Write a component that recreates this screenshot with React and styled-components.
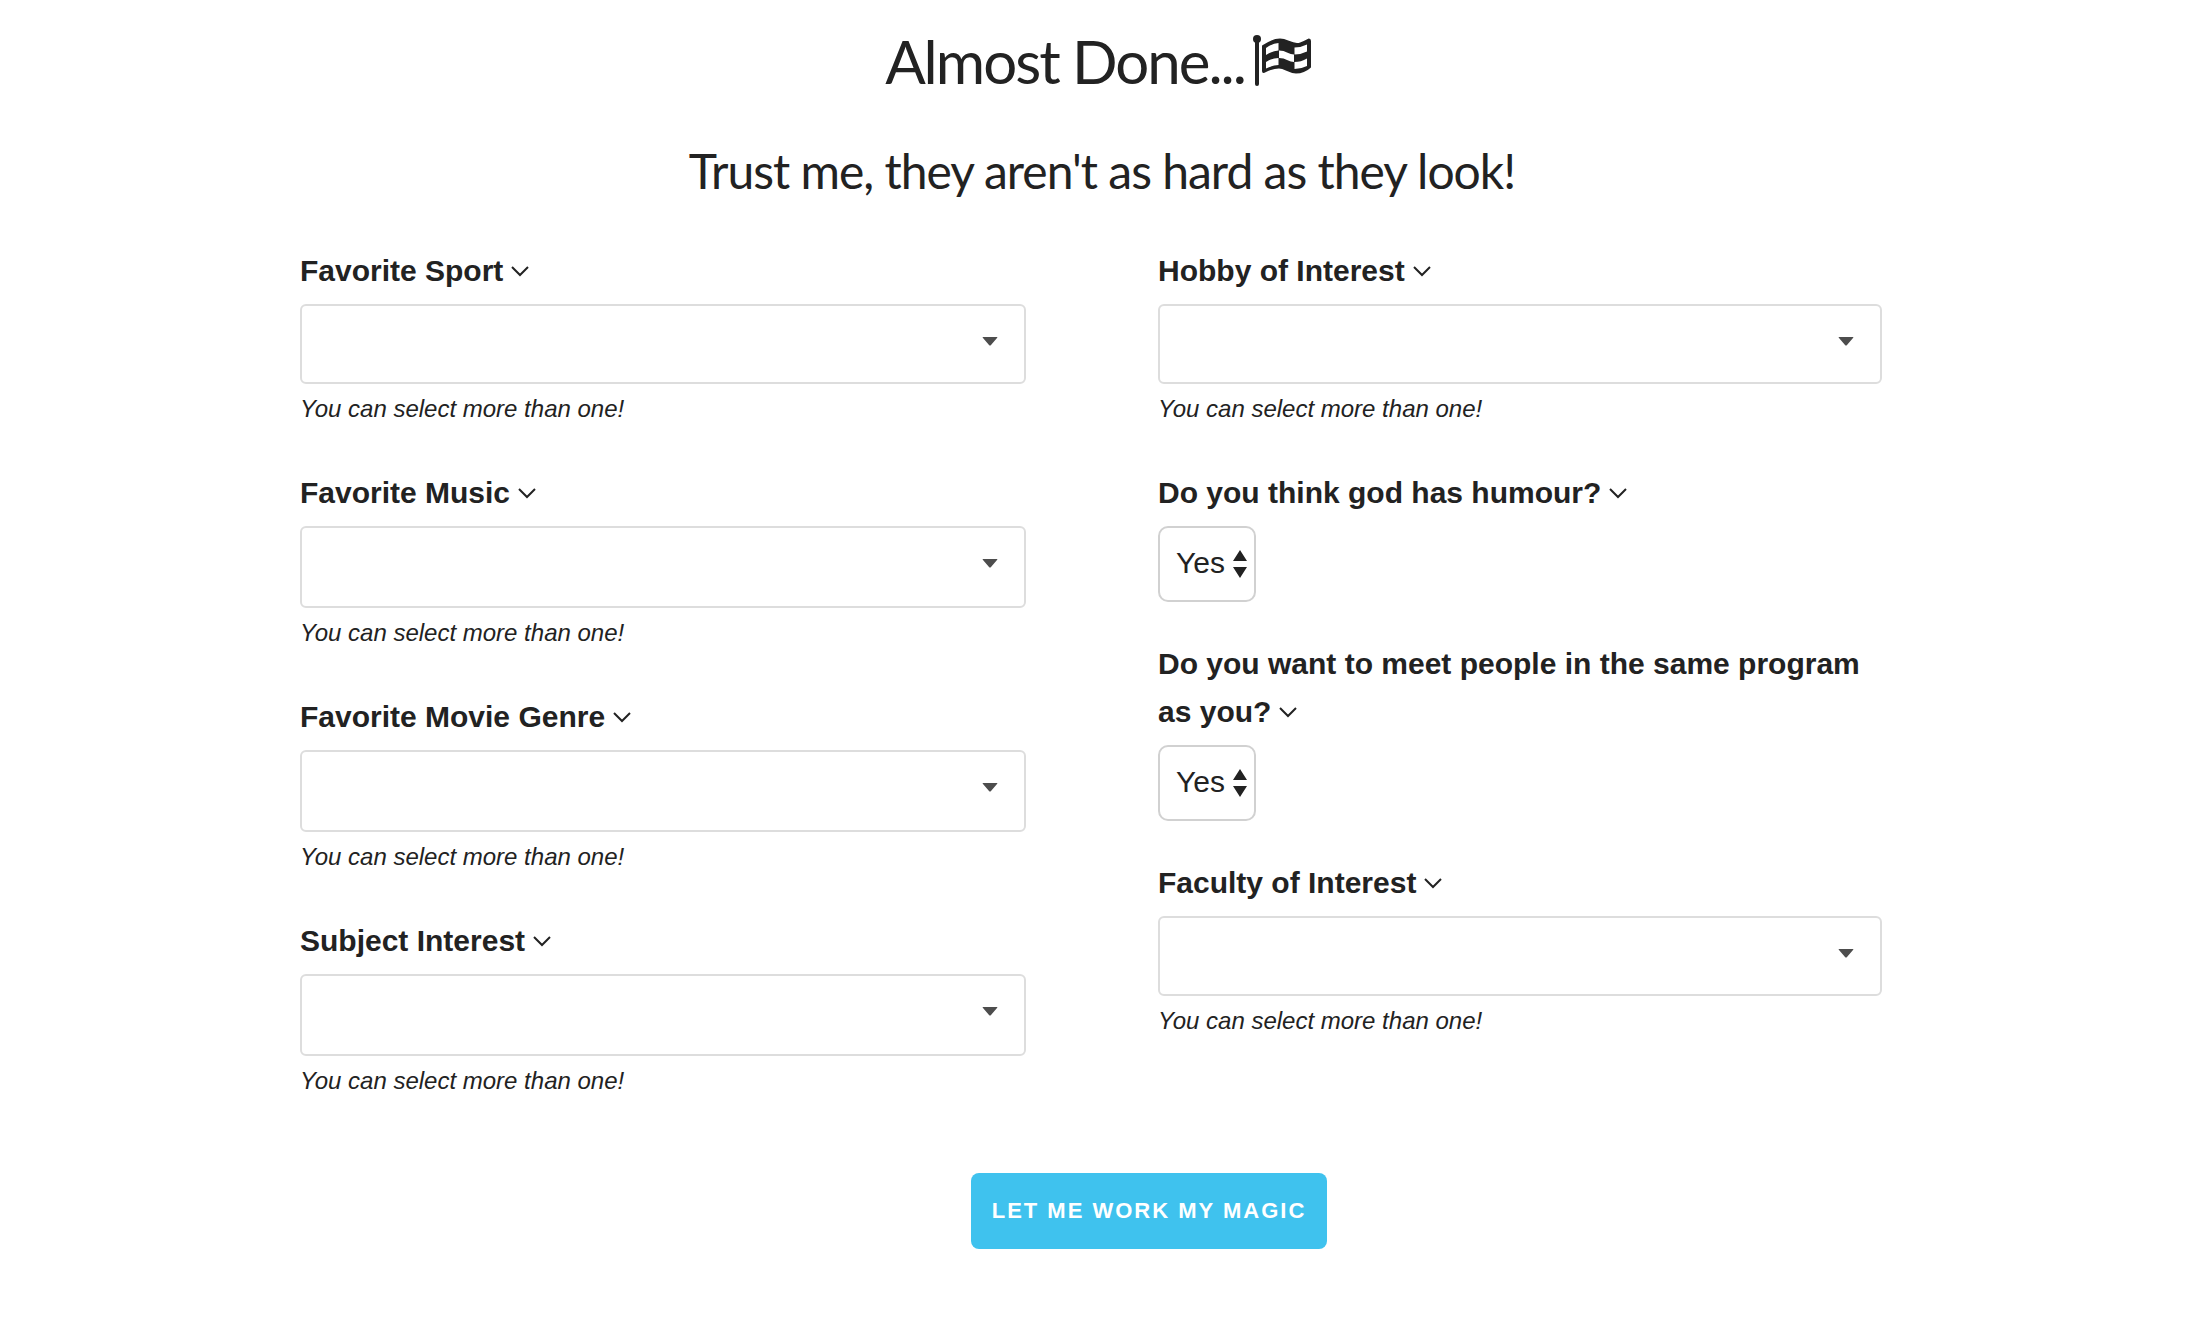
import React from "react";
import styled, { createGlobalStyle } from "styled-components";

const GlobalStyle = createGlobalStyle`
  * { box-sizing: border-box; }
  body {
    margin: 0;
    background: #fff;
    color: #222;
    font: 400 30px/48px "Liberation Sans", Arial, sans-serif;
  }
`;

const Page = styled.main`
  padding: 22px 0 74px;
`;

const Title = styled.h1`
  margin: 0;
  display: flex;
  justify-content: center;
  align-items: center;
  gap: 8px;
  font: 400 60px/78px Lato, sans-serif;
  letter-spacing: -2px;
`;

const Subtitle = styled.h2`
  margin: 32px 0 0;
  padding-left: 8px;
  text-align: center;
  font: 400 48px/78px Lato, sans-serif;
  letter-spacing: -1px;
`;

const Form = styled.form`
  margin-top: 37px;
`;

const Columns = styled.div`
  display: grid;
  grid-template-columns: 726fr 724fr;
  gap: 132px;
  padding: 0 314px 0 300px;
`;

const Column = styled.div`
  display: flex;
  flex-direction: column;
  gap: 35px;
`;

const Field = styled.div`
  display: flex;
  flex-direction: column;
  align-items: flex-start;
`;

const Label = styled.label`
  margin-bottom: 9px;
  font-weight: 700;
`;

const Chevron = styled.svg`
  width: 18px;
  height: 12px;
  margin-left: 8px;
  vertical-align: 4px;
`;

const Picker = styled.button`
  display: flex;
  justify-content: flex-end;
  align-items: flex-start;
  width: 100%;
  height: ${(p) => (p.$tall ? 82 : 80)}px;
  padding: 31px 26px 0 0;
  border: 2px solid #ddd;
  border-radius: 6px;
  background: #fff;
`;

const Hint = styled.em`
  font-size: 24px;
  line-height: 50px;
`;

const SelectBox = styled.span`
  display: grid;
  align-items: center;
  justify-items: end;
  width: 98px;
  margin-bottom: 3px;

  & > * { grid-area: 1 / 1; }
  svg { margin-right: 9px; pointer-events: none; }
`;

const Select = styled.select`
  appearance: none;
  width: 100%;
  height: 76px;
  padding: 0 0 2px 16px;
  border: 2px solid #d1d1d1;
  border-radius: 10px;
  background: #fff;
  color: #222;
  font: inherit;
`;

const Actions = styled.div`
  display: flex;
  justify-content: center;
  padding: 67px 0 0 102px;
`;

const Submit = styled.button`
  height: 76px;
  padding: 0 21px;
  border: 0;
  border-radius: 8px;
  background: #3fc2ee;
  color: #fff;
  font: 700 22px/76px "Liberation Sans", Arial, sans-serif;
  letter-spacing: 2px;
  text-transform: uppercase;
`;

const FlagIcon = () => (
  <svg width="58" height="52" viewBox="0 0 58 52" aria-hidden="true">
    <circle cx="4" cy="4" r="4" fill="#222" />
    <path d="M4 4V49" stroke="#222" strokeWidth="4" strokeLinecap="round" />
    <path
      d="M10 11Q20 4.500 27 4.500C34 4.500 37 9 44 9C49 9 54 5 56 4.500Q57 4.500 57 6V32Q51 37.500 43 37.500C36 37.500 32 32.500 26 32.500Q19 32.500 10.500 37Q10 37 10 36Z"
      fill="#222"
      stroke="#222"
      strokeWidth="2"
      strokeLinejoin="round"
    />
    <path
      d="M13 13Q19 8.500 25.500 8V15.500Q19 16 13 20ZM26 15.500Q31 15.500 34 17.500Q38 19.500 41 19.500V27Q38 27 34 25Q31 23 26 23ZM41.500 12.500Q48 12.500 54 9.500V16.500Q48 19.500 41.500 19.500ZM13 27Q19 23 25.500 23V30Q19 30.500 13 33.500ZM41.500 27Q48 27 54 23.500V31Q48 34 41.500 34Z"
      fill="#fff"
    />
  </svg>
);

const ChevronIcon = () => (
  <Chevron viewBox="0 0 18 12" aria-hidden="true">
    <path d="M1 2L9 10L17 2" fill="none" stroke="#222" strokeWidth="2" />
  </Chevron>
);

function MultiField({ id, label, tall }) {
  return (
    <Field>
      <Label htmlFor={id}>{label}<ChevronIcon /></Label>
      <Picker id={id} type="button" aria-haspopup="listbox" $tall={tall}>
        <svg width="16" height="9" viewBox="0 0 16 9" aria-hidden="true">
          <path d="M1 0H15Q16 0 15 1L9 8Q8 9 7 8L1 1Q0 0 1 0Z" fill="#4d4d4d" />
        </svg>
      </Picker>
      <Hint>You can select more than one!</Hint>
    </Field>
  );
}

function YesNoField({ id, label }) {
  return (
    <Field>
      <Label htmlFor={id}>{label}<ChevronIcon /></Label>
      <SelectBox>
        <Select id={id} defaultValue="Yes">
          <option>Yes</option>
          <option>No</option>
        </Select>
        <svg width="14" height="28" viewBox="0 0 14 28" aria-hidden="true">
          <path d="M7 0L14 11H0ZM7 28L14 17H0Z" fill="#222" />
        </svg>
      </SelectBox>
    </Field>
  );
}

export default function App() {
  return (
    <>
      <GlobalStyle />
      <Page>
        <Title>Almost Done...<FlagIcon /></Title>
        <Subtitle>Trust me, they aren't as hard as they look!</Subtitle>
        <Form onSubmit={(e) => e.preventDefault()}>
          <Columns>
            <Column>
              <MultiField id="sport" label="Favorite Sport" />
              <MultiField id="music" label="Favorite Music" tall />
              <MultiField id="movie" label="Favorite Movie Genre" tall />
              <MultiField id="subject" label="Subject Interest" tall />
            </Column>
            <Column>
              <MultiField id="hobby" label="Hobby of Interest" />
              <YesNoField id="humour" label="Do you think god has humour?" />
              <YesNoField id="program" label="Do you want to meet people in the same program as you?" />
              <MultiField id="faculty" label="Faculty of Interest" />
            </Column>
          </Columns>
          <Actions>
            <Submit type="submit">Let me work my magic</Submit>
          </Actions>
        </Form>
      </Page>
    </>
  );
}
